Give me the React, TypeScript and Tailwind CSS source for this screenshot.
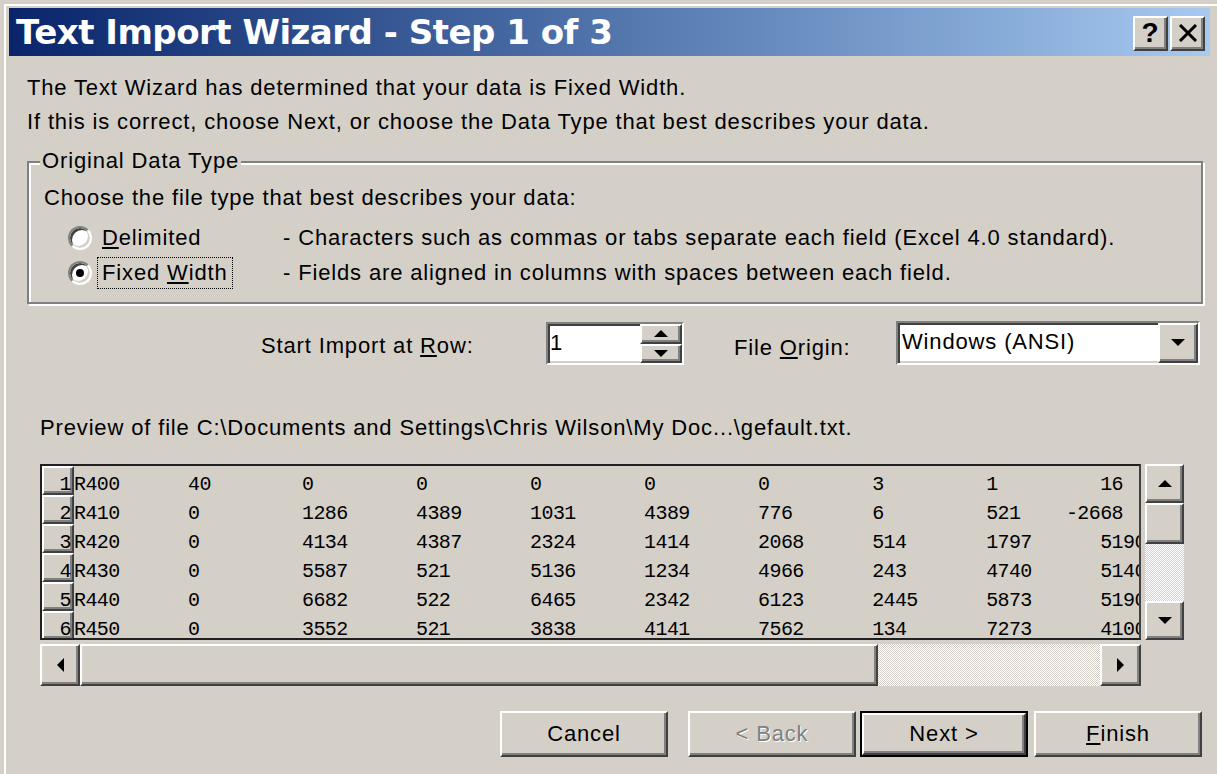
import React from 'react'

// classic 3D bevels
const raised =
  'bg-[#d4d0c8] border-2 border-t-white border-l-white border-r-[#404040] border-b-[#404040] shadow-[inset_-2px_-2px_0_#808080]'
const sunken =
  'border-2 border-t-[#808080] border-l-[#808080] border-r-white border-b-white shadow-[inset_2px_2px_0_#404040,inset_-2px_-2px_0_#d4d0c8]'
const dither = 'bg-[repeating-conic-gradient(#ffffff_0_25%,#d4d0c8_0_50%)] bg-[length:2px_2px]'
const mono = "font-['Liberation_Mono','Courier_New',monospace] text-[20px] tracking-[-0.6px]"

type Dir = 'up' | 'down' | 'left' | 'right'

function Arrow({ dir, size = 14 }: { dir: Dir; size?: number }) {
  const h = size / 2
  const pts: Record<Dir, string> = {
    up: `0,${h} ${size},${h} ${h},0`,
    down: `0,0 ${size},0 ${h},${h}`,
    left: `${h},0 ${h},${size} 0,${h}`,
    right: `0,0 0,${size} ${h},${h}`,
  }
  const vertical = dir === 'up' || dir === 'down'
  return (
    <svg width={vertical ? size : h} height={vertical ? h : size} className="block">
      <polygon points={pts[dir]} fill="#000" />
    </svg>
  )
}

function Radio({ checked }: { checked?: boolean }) {
  return (
    <span className="relative flex h-[24px] w-[24px] shrink-0 items-center justify-center rounded-full border-2 border-t-[#808080] border-l-[#808080] border-r-white border-b-white bg-white shadow-[inset_2px_2px_0_#404040,inset_-2px_-2px_0_#d4d0c8]">
      {checked && <span className="h-[8px] w-[8px] rounded-full bg-black" />}
    </span>
  )
}

const rows: string[][] = [
  ['R400', '40', '0', '0', '0', '0', '0', '3', '1', '16'],
  ['R410', '0', '1286', '4389', '1031', '4389', '776', '6', '521', '-2668'],
  ['R420', '0', '4134', '4387', '2324', '1414', '2068', '514', '1797', '5190'],
  ['R430', '0', '5587', '521', '5136', '1234', '4966', '243', '4740', '5140'],
  ['R440', '0', '6682', '522', '6465', '2342', '6123', '2445', '5873', '5190'],
  ['R450', '0', '3552', '521', '3838', '4141', '7562', '134', '7273', '4100'],
]

function fixedLine(cells: string[]) {
  return cells
    .map((c, i) => {
      if (i === cells.length - 1) return c
      // the -2668 field in row 2 sits three characters further left
      const w = i === 8 && cells[9].startsWith('-') ? 7 : 10
      return c.padEnd(w, ' ')
    })
    .join('')
}

function TitleBar() {
  return (
    <div className="flex h-[48px] w-[1201px] items-center justify-between bg-gradient-to-r from-[#0a246a] to-[#a6caf0] pl-[7px] pr-[5px]">
      <span className="font-['DejaVu_Sans',Verdana,sans-serif] text-[34px] font-bold leading-none tracking-[-0.5px] text-white">
        Text Import Wizard - Step 1 of 3
      </span>
      <div className="flex gap-[2px] pt-[2px]">
        <button className={`${raised} flex h-[35px] w-[35px] items-center justify-center`}>
          <span className="font-['Liberation_Sans',Arial,sans-serif] text-[28px] font-bold leading-none">?</span>
        </button>
        <button className={`${raised} flex h-[35px] w-[35px] items-center justify-center`}>
          <svg width="20" height="18" viewBox="0 0 20 18">
            <path d="M2 1 L18 17 M18 1 L2 17" stroke="#000" strokeWidth="3" />
          </svg>
        </button>
      </div>
    </div>
  )
}

function DialogButton({ label, disabled, isDefault }: { label: React.ReactNode; disabled?: boolean; isDefault?: boolean }) {
  const inner = (
    <div
      className={`${raised} flex h-full w-full items-center justify-center ${
        disabled ? 'text-[#808080] [text-shadow:1px_1px_0_#fff]' : 'text-black'
      }`}
    >
      {label}
    </div>
  )
  if (isDefault) {
    return <div className="h-[46px] w-[168px] border-2 border-black">{inner}</div>
  }
  return <div className="h-[46px] w-[168px]">{inner}</div>
}

export default function App() {
  return (
    <div className="h-[774px] w-[1217px] overflow-hidden bg-[#d4d0c8] pl-[4px] pt-[4px] font-['Liberation_Sans',Arial,sans-serif] text-[22px] leading-[34px] tracking-[0.85px] text-[#000]">
      <div className="h-full border-l-2 border-t-2 border-white pl-[3px] pt-[2px]">
        <TitleBar />

        {/* intro */}
        <div className="ml-[18px] mt-[15px]">
          <p>The Text Wizard has determined that your data is Fixed Width.</p>
          <p>If this is correct, choose Next, or choose the Data Type that best describes your data.</p>
        </div>

        {/* Original Data Type group */}
        <div className="relative ml-[18px] mt-[22px] h-[143px] w-[1176px] border-2 border-[#808080] shadow-[inset_2px_2px_0_#fff,2px_2px_0_#fff]">
          <span className="absolute left-[11px] top-[-19px] bg-[#d4d0c8] px-[2px]">Original Data Type</span>
          <p className="ml-[15px] mt-[18px]">Choose the file type that best describes your data:</p>
          <div className="mt-[5px] flex h-[35px] items-center pl-[39px]">
            <Radio />
            <span className="ml-[5px] w-[186px] shrink-0">
              <span className="inline-block border border-transparent px-[4px] leading-[30px]">
                <u>D</u>elimited
              </span>
            </span>
            <span>- Characters such as commas or tabs separate each field (Excel 4.0 standard).</span>
          </div>
          <div className="flex h-[35px] items-center pl-[39px]">
            <Radio checked />
            <span className="ml-[5px] w-[186px] shrink-0">
              <span className="inline-block border border-dotted border-black px-[4px] leading-[30px]">
                Fixed <u>W</u>idth
              </span>
            </span>
            <span>- Fields are aligned in columns with spaces between each field.</span>
          </div>
        </div>

        {/* start row / file origin */}
        <div className="ml-[252px] mt-[16px] flex h-[45px] items-center">
          <span className="w-[285px] pt-[6px]">
            Start Import at <u>R</u>ow:
          </span>
          <div className={`${sunken} mt-[2px] flex h-[43px] w-[138px] bg-white`}>
            <span className="flex-1 pl-[2px] leading-[38px]">1</span>
            <div className="flex w-[42px] flex-col">
              <div className={`${raised} flex flex-1 items-center justify-center`}>
                <Arrow dir="up" size={14} />
              </div>
              <div className={`${raised} flex flex-1 items-center justify-center`}>
                <Arrow dir="down" size={14} />
              </div>
            </div>
          </div>
          <span className="ml-[50px] w-[162px] pt-[10px]">
            File <u>O</u>rigin:
          </span>
          <div className={`${sunken} flex h-[44px] w-[304px] bg-white`}>
            <span className="flex-1 pl-[4px] leading-[38px]">Windows (ANSI)</span>
            <div className={`${raised} flex w-[40px] items-center justify-center`}>
              <Arrow dir="down" size={14} />
            </div>
          </div>
        </div>

        {/* preview */}
        <p className="ml-[31px] mt-[46px]">
          Preview of file C:\Documents and Settings\Chris Wilson\My Doc...\gefault.txt.
        </p>

        <div className="ml-[31px] mt-[19px] flex items-start gap-[4px]">
          <div className="h-[176px] w-[1101px] overflow-hidden border-2 border-[#202020] border-r-[#404040]">
            {rows.map((r, i) => (
              <div key={i} className="flex h-[29px]">
                <div className={`${raised} ${mono} w-[32px] shrink-0 pr-[1px] pt-[4px] text-right leading-[25px]`}>
                  {i + 1}
                </div>
                <div className={`${mono} whitespace-pre pt-[4px] leading-[29px]`}>{fixedLine(r)}</div>
              </div>
            ))}
          </div>
          <div className="flex h-[176px] w-[39px] flex-col">
            <div className={`${raised} flex h-[39px] items-center justify-center`}>
              <Arrow dir="up" />
            </div>
            <div className={`${raised} h-[41px]`} />
            <div className={`flex-1 ${dither}`} />
            <div className={`${raised} flex h-[39px] items-center justify-center`}>
              <Arrow dir="down" />
            </div>
          </div>
        </div>

        {/* horizontal scroll bar */}
        <div className="ml-[31px] mt-[4px] flex h-[42px] w-[1101px]">
          <div className={`${raised} flex w-[40px] items-center justify-center`}>
            <Arrow dir="left" />
          </div>
          <div className={`${raised} w-[798px]`} />
          <div className={`flex-1 ${dither}`} />
          <div className={`${raised} flex w-[41px] items-center justify-center`}>
            <Arrow dir="right" />
          </div>
        </div>

        {/* buttons */}
        <div className="ml-[491px] mt-[25px] flex">
          <DialogButton label="Cancel" />
          <div className="ml-[20px]">
            <DialogButton label="< Back" disabled />
          </div>
          <div className="ml-[4px]">
            <DialogButton label="Next >" isDefault />
          </div>
          <div className="ml-[6px]">
            <DialogButton
              label={
                <span>
                  <u>F</u>inish
                </span>
              }
            />
          </div>
        </div>
      </div>
    </div>
  )
}
